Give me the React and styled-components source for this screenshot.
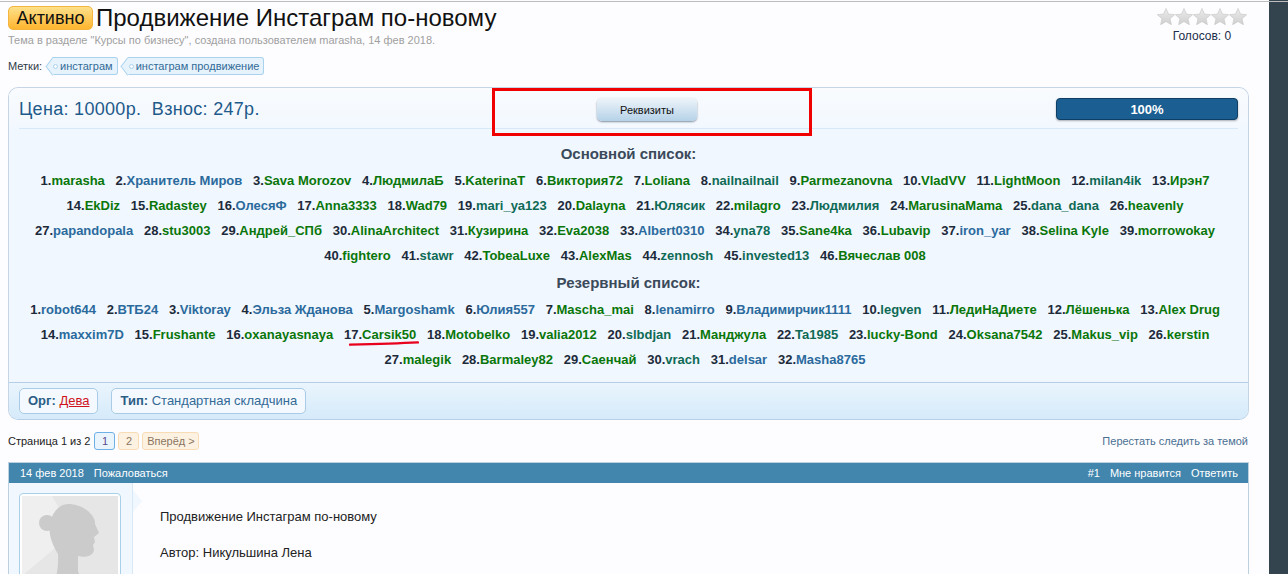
import React from 'react';
import styled, { createGlobalStyle } from 'styled-components';

const Global = createGlobalStyle`
  html, body { margin: 0; padding: 0; background: #fdfdff; }
  body { font-family: "Liberation Sans", Arial, sans-serif; color: #1d2a3a; overflow: hidden; height: 574px; }
`;

const Shell = styled.div`
  position: relative;
  display: flex;
  width: 1288px;
  height: 574px;
  overflow: hidden;
  &::before { content: ''; position: absolute; left: 0; right: 0; top: 1px; height: 1px; background: #bdbdbd; z-index: 3; }
`;
const Main = styled.div`
  width: 1269px;
  box-sizing: border-box;
  padding: 6px 20px 0 8px;
  flex: none;
`;
const Side = styled.div`
  width: 19px;
  background: #33444f;
  flex: none;
`;
const TitleBar = styled.div`
  display: flex;
  justify-content: space-between;
  height: 81px;
`;
const TitleRow = styled.div`
  display: flex;
  align-items: center;
  gap: 3px;
  height: 24px;
`;
const Badge = styled.span`
  display: block;
  width: 85px;
  height: 24px;
  box-sizing: border-box;
  border: 1px solid #f4b43e;
  border-radius: 5px;
  background: linear-gradient(#ffe08a, #ffb52e);
  font-size: 18px;
  line-height: 23px;
  text-align: center;
  color: #111;
`;
const Title = styled.h1`
  margin: 0;
  font-size: 24px;
  font-weight: 400;
  color: #111;
  line-height: 24px;
`;
const Meta = styled.div`
  margin-top: 3px;
  font-size: 11px;
  line-height: 14px;
  color: #a0a0a0;
`;
const TagRow = styled.div`
  display: flex;
  align-items: center;
  margin-top: 10px;
  font-size: 11px;
  height: 18px;
  color: #2f3b47;
`;
const Tag = styled.span`
  position: relative;
  display: block;
  box-sizing: border-box;
  height: 18px;
  margin-left: 10px;
  padding: 0 4px 0 8px;
  line-height: 16px;
  background: #e6f3fd;
  border: 1px solid #a9d2ef;
  border-left: 0;
  border-radius: 0 3px 3px 0;
  color: #336a96;
  &::before {
    content: '';
    position: absolute;
    left: -6.5px;
    top: 1.5px;
    width: 13px;
    height: 13px;
    box-sizing: border-box;
    background: #e6f3fd;
    border-left: 1px solid #a9d2ef;
    border-bottom: 1px solid #a9d2ef;
    transform: scaleX(.75) rotate(45deg);
  }
  &::after {
    content: '';
    position: absolute;
    left: 1px;
    top: 6px;
    width: 3px;
    height: 3px;
    border: 1px solid #a9d2ef;
    border-radius: 50%;
    background: #fdfdff;
  }
`;
const TagText = styled.span`
  position: relative;
  z-index: 1;
`;
const Rating = styled.div`
  width: 92px;
  text-align: center;
  margin: 2px 1px 0 0;
  font-size: 12px;
  color: #1b2d4a;
`;
const Stars = styled.div`
  display: flex;
  height: 17px;
  margin-bottom: 4px;
  padding-left: 1px;
`;
const Panel = styled.div`
  width: 1241px;
  box-sizing: border-box;
  border: 1px solid #c5d5e5;
  border-bottom-color: #b5d0e6;
  border-radius: 10px;
  background: #f0f7ff;
  overflow: hidden;
`;
const PanelHead = styled.div`
  display: flex;
  align-items: center;
  height: 40px;
  margin: 0 10px;
  border-bottom: 1px solid #d7e9f9;
`;
const PanelHeadBg = styled.div`
  background: linear-gradient(#f9fbfd, #f2f8ff);
`;
const Price = styled.div`
  width: 578px;
  font-size: 18px;
  letter-spacing: .3px;
  color: #1e5a8a;
  white-space: pre;
  margin-top: 3px;
`;
const ReqButton = styled.button`
  width: 100px;
  height: 23px;
  padding: 0;
  border: 0;
  border-radius: 5px;
  background: linear-gradient(#eef4f9, #b5d2e8);
  box-shadow: 0 1px 2px rgba(60, 70, 90, .6);
  font: 11px "Liberation Sans", sans-serif;
  color: #111;
  margin-top: 3px;
`;
const Progress = styled.div`
  margin-left: auto;
  width: 182px;
  height: 22px;
  box-sizing: border-box;
  border: 1px solid #0e3f66;
  border-radius: 4px;
  background: #1a5e92;
  box-shadow: 0 1px 2px rgba(0, 0, 0, .3);
  color: #fff;
  font-size: 13px;
  font-weight: 700;
  line-height: 21px;
  text-align: center;
  margin-top: 2px;
`;
const PanelBody = styled.div`
  padding: 12px 0 10px;
`;
const ListTitle = styled.div`
  font-size: 15px;
  font-weight: 700;
  line-height: 25px;
  text-align: center;
  color: #3b4a5a;
  margin-top: ${p => p.$gap || 0}px;
  margin-bottom: 2px;
`;
const NameRow = styled.div`
  display: flex;
  justify-content: center;
  gap: 10.75px;
  height: 25px;
  padding-right: 7px;
  line-height: 25px;
  font-size: 13px;
  font-weight: 700;
  white-space: nowrap;
`;
const Entry = styled.span`
  position: relative;
  color: #1d2a3a;
`;
const Name = styled.span`
  color: ${p => ({ g: '#0a760a', b: '#2b6a9c', t: '#0f6a55' })[p.$c]};
`;
const Underline = styled.svg`
  position: absolute;
  left: 5px;
  top: 19px;
  width: 70px;
  height: 5px;
`;
const PanelFoot = styled.div`
  display: flex;
  gap: 13px;
  height: 37px;
  box-sizing: border-box;
  padding: 5px 10px 0;
  border-top: 1px solid #b5d0e6;
  background: linear-gradient(#eaf5fd, #d5eafa);
`;
const FootTag = styled.span`
  display: block;
  box-sizing: border-box;
  height: 26px;
  padding: 0 8px;
  border: 1px solid #a9cbe5;
  border-radius: 5px;
  background: #f3f9ff;
  font-size: 13px;
  line-height: 24px;
  color: #336a96;
  b { color: #2b5d85; }
`;
const OrgLink = styled.a`
  color: #d0121c;
  text-decoration: underline;
`;
const PageNav = styled.div`
  display: flex;
  align-items: center;
  height: 18px;
  margin-top: 12px;
  font-size: 11px;
  color: #222;
`;
const PageBtn = styled.span`
  display: block;
  box-sizing: border-box;
  height: 18px;
  width: ${p => p.$wide ? '57px' : '21px'};
  margin-left: ${p => p.$first ? '4px' : '3px'};
  line-height: 16px;
  text-align: center;
  white-space: nowrap;
  border-radius: 3px;
  border: 1px solid ${p => p.$on ? '#6fb0e6' : '#f8dcb6'};
  background: ${p => p.$on ? '#eaf4fd' : '#fdf2e2'};
  color: ${p => p.$on ? '#5a4a8a' : '#8a7460'};
`;
const Unfollow = styled.a`
  margin-left: auto;
  margin-right: 1px;
  color: #4a6f91;
`;
const Post = styled.div`
  width: 1241px;
  box-sizing: border-box;
  margin-top: 12px;
  border: 1px solid #bcd0e0;
  border-bottom: 0;
`;
const PostBar = styled.div`
  display: flex;
  justify-content: space-between;
  height: 20px;
  padding: 0 10px 0 11px;
  background: #4286ae;
  color: #fff;
  font-size: 11px;
  line-height: 20px;
`;
const BarGroup = styled.div`
  display: flex;
  gap: 10px;
`;
const PostBody = styled.div`
  display: flex;
  height: 200px;
`;
const PostUser = styled.div`
  position: relative;
  width: 124px;
  box-sizing: border-box;
  padding: 10px 0 0 10px;
  background: #f0f7ff;
  border-right: 1px solid #d7e9f9;
  &::after {
    content: '';
    position: absolute;
    right: -10px;
    top: 7px;
    width: 9px;
    height: 22px;
    background: #f0f7ff;
    clip-path: polygon(0 0, 100% 50%, 0 100%);
  }
`;
const Avatar = styled.div`
  width: 102px;
  height: 110px;
  box-sizing: border-box;
  padding: 2px;
  border: 1px solid #a8d0e8;
  border-radius: 4px;
  background: #fff;
`;
const AvatarImg = styled.svg`
  display: block;
  width: 96px;
  height: 104px;
`;
const PostText = styled.div`
  padding: 25px 0 0 27px;
  font-size: 13px;
  line-height: 18px;
  color: #222;
`;
const Para = styled.p`
  margin: 0 0 18px;
`;

const main = [
  [['marasha','g'],['Хранитель Миров','b'],['Sava Morozov','g'],['ЛюдмилаБ','g'],['KaterinaT','g'],['Виктория72','g'],['Loliana','g'],['nailnailnail','t'],['Parmezanovna','g'],['VladVV','g'],['LightMoon','g'],['milan4ik','t'],['Ирэн7','g']],
  [['EkDiz','g'],['Radastey','g'],['ОлесяФ','b'],['Anna3333','g'],['Wad79','g'],['mari_ya123','t'],['Dalayna','g'],['Юлясик','t'],['milagro','g'],['Людмилия','t'],['MarusinaMama','g'],['dana_dana','t'],['heavenly','g']],
  [['papandopala','b'],['stu3003','g'],['Андрей_СПб','g'],['AlinaArchitect','g'],['Кузирина','g'],['Eva2038','g'],['Albert0310','b'],['yna78','t'],['Sane4ka','g'],['Lubavip','g'],['iron_yar','b'],['Selina Kyle','g'],['morrowokay','g']],
  [['fightero','g'],['stawr','t'],['TobeaLuxe','g'],['AlexMas','g'],['zennosh','t'],['invested13','t'],['Вячеслав 008','g']],
];
const reserve = [
  [['robot644','b'],['ВТБ24','b'],['Viktoray','b'],['Эльза Жданова','b'],['Margoshamk','b'],['Юлия557','b'],['Mascha_mai','g'],['lenamirro','b'],['Владимирчик1111','b'],['legven','t'],['ЛедиНаДиете','g'],['Лёшенька','g'],['Alex Drug','g']],
  [['maxxim7D','b'],['Frushante','g'],['oxanayasnaya','g'],['Carsik50','g'],['Motobelko','g'],['valia2012','g'],['slbdjan','t'],['Манджула','g'],['Ta1985','t'],['lucky-Bond','g'],['Oksana7542','g'],['Makus_vip','g'],['kerstin','g']],
  [['malegik','g'],['Barmaley82','g'],['Саенчай','g'],['vrach','t'],['delsar','b'],['Masha8765','b']],
];

function Rows({ rows }) {
  let n = 0;
  return rows.map((row, i) => (
    <NameRow key={i}>
      {row.map(([name, c]) => {
        n += 1;
        return (
          <Entry key={name}>
            {n}.<Name $c={c}>{name}</Name>
            {name === 'Carsik50' && (
              <Underline viewBox="0 0 70 5">
                <path d="M1 3.6 C 20 3.2, 50 2.4, 69 1.4" stroke="#e8001c" strokeWidth="2.4" fill="none" strokeLinecap="round" />
              </Underline>
            )}
          </Entry>
        );
      })}
    </NameRow>
  ));
}

function Star() {
  return (
    <svg width="18" height="17" viewBox="0 0 18 17">
      <defs>
        <linearGradient id="starFill" x1="0" y1="0" x2="0" y2="1">
          <stop offset="0" stopColor="#ececec" />
          <stop offset="1" stopColor="#cfcfcf" />
        </linearGradient>
      </defs>
      <path d="M9 .5l2.5 5.6 6.1.6-4.6 4 1.4 6-5.4-3.2-5.4 3.2 1.4-6-4.6-4 6.1-.6z" fill="url(#starFill)" stroke="#c4c4c4" strokeWidth=".6" />
    </svg>
  );
}

const RedFrame = styled.div`
  position: absolute;
  left: 492px;
  top: 88px;
  width: 320px;
  height: 48px;
  box-sizing: border-box;
  border: 3px solid #f00000;
  z-index: 5;
`;

export default function App() {
  return (
    <>
      <Global />
      <Shell>
        <Main>
          <TitleBar>
            <div>
              <TitleRow>
                <Badge>Активно</Badge>
                <Title>Продвижение Инстаграм по-новому</Title>
              </TitleRow>
              <Meta>Тема в разделе "Курсы по бизнесу", создана пользователем marasha, 14 фев 2018.</Meta>
              <TagRow>
                Метки:
                <Tag><TagText>инстаграм</TagText></Tag>
                <Tag><TagText>инстаграм продвижение</TagText></Tag>
              </TagRow>
            </div>
            <Rating>
              <Stars><Star /><Star /><Star /><Star /><Star /></Stars>
              Голосов: 0
            </Rating>
          </TitleBar>
          <Panel>
            <PanelHeadBg>
              <PanelHead>
                <Price>Цена: 10000р.  Взнос: 247р.</Price>
                <ReqButton>Реквизиты</ReqButton>
                <Progress>100%</Progress>
              </PanelHead>
            </PanelHeadBg>
            <PanelBody>
              <ListTitle>Основной список:</ListTitle>
              <Rows rows={main} />
              <ListTitle $gap={2}>Резервный список:</ListTitle>
              <Rows rows={reserve} />
            </PanelBody>
            <PanelFoot>
              <FootTag><b>Орг:</b> <OrgLink>Дева</OrgLink></FootTag>
              <FootTag><b>Тип:</b> Стандартная складчина</FootTag>
            </PanelFoot>
          </Panel>
          <PageNav>
            Страница 1 из 2
            <PageBtn $first $on>1</PageBtn>
            <PageBtn>2</PageBtn>
            <PageBtn $wide>Вперёд &gt;</PageBtn>
            <Unfollow>Перестать следить за темой</Unfollow>
          </PageNav>
          <Post>
            <PostBar>
              <BarGroup><span>14 фев 2018</span><span>Пожаловаться</span></BarGroup>
              <BarGroup><span>#1</span><span>Мне нравится</span><span>Ответить</span></BarGroup>
            </PostBar>
            <PostBody>
              <PostUser>
                <Avatar>
                  <AvatarImg viewBox="0 0 96 104">
                    <rect width="96" height="104" fill="#e6e6e6" />
                    <path d="M0 0H30L52 36L0 80Z" fill="#efefef" />
                    <circle cx="25" cy="27" r="8" fill="#cbcbcb" />
                    <path d="M46 8C62 8 74 20 73 28L77 37L72 41L73 46L71 49L72 54C71 60 64 62 56 60L56 75C58 82 64 90 72 104H24C32 90 37 78 36 58C30 48 26 38 28 26C31 15 38 8 46 8Z" fill="#cbcbcb" />
                  </AvatarImg>
                </Avatar>
              </PostUser>
              <PostText>
                <Para>Продвижение Инстаграм по-новому</Para>
                <Para>Автор: Никульшина Лена</Para>
              </PostText>
            </PostBody>
          </Post>
        </Main>
        <Side />
        <RedFrame />
      </Shell>
    </>
  );
}
